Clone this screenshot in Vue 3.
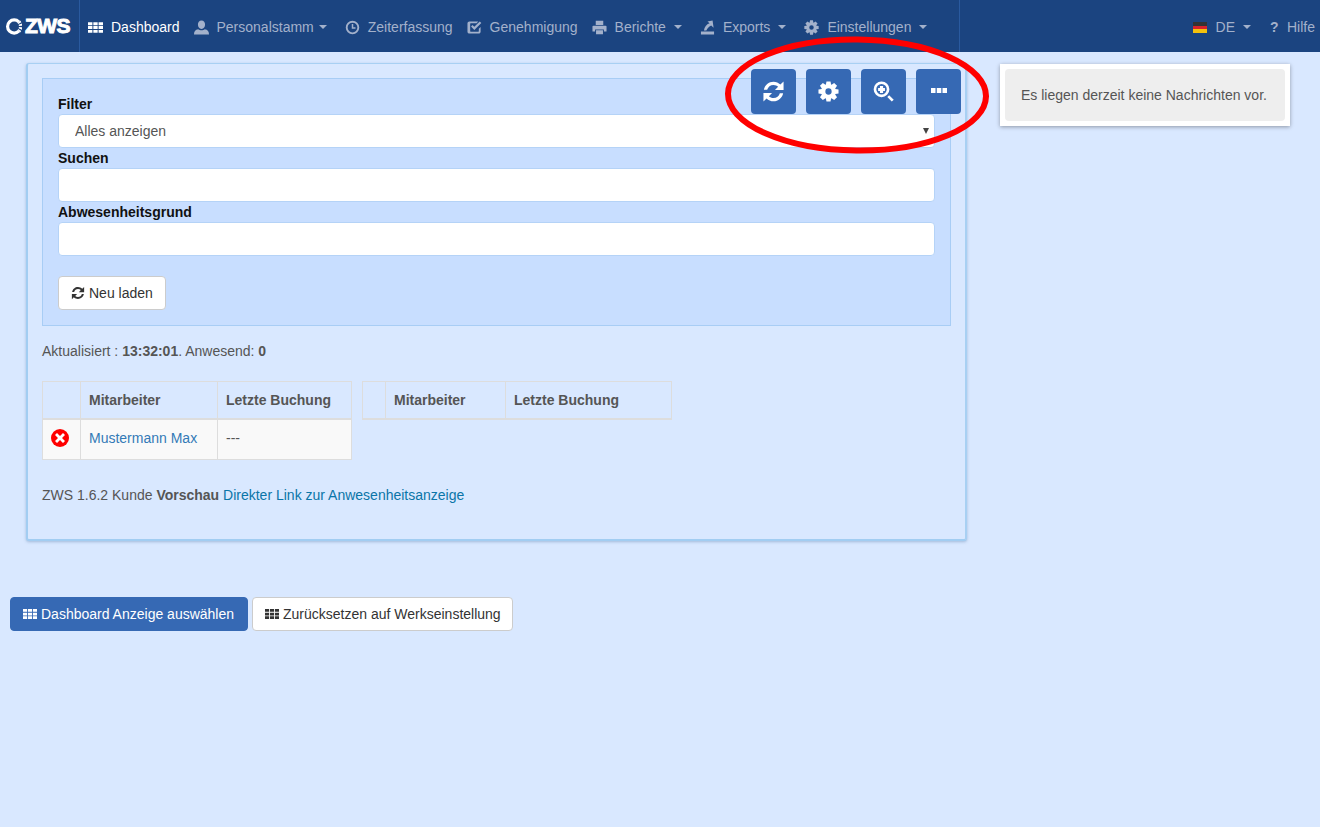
<template>
  <div class="page">
    <nav class="navbar">
      <a class="brand">
        <svg class="brand-ring" viewBox="0 0 16 16">
          <path class="ring-solid" d="M13 3.6A6.2 6.2 0 1 0 13 12.4" />
          <path class="ring-dash" d="M13 3.6A6.2 6.2 0 0 1 13 12.4" />
        </svg>
        <span class="brand-name">ZWS</span>
      </a>

      <ul class="nav-main">
        <li
          v-for="item in menu"
          :key="item.label"
          class="nav-item"
          :class="{ active: item.active, tight: item.tight }"
        >
          <svg class="ico" viewBox="0 0 16 16"><path :d="icons[item.icon]" /></svg>
          <span class="nav-label">{{ item.label }}</span>
          <span v-if="item.caret" class="caret"></span>
        </li>
      </ul>

      <ul class="nav-right">
        <li class="nav-item lang">
          <span class="flag"></span>
          <span class="nav-label">DE</span>
          <span class="caret"></span>
        </li>
        <li class="nav-item help">
          <span class="help-mark">?</span>
          <span>Hilfe</span>
        </li>
      </ul>
    </nav>

    <main class="content">
      <div class="top-row">
        <section class="card">
          <div class="tools">
            <button v-for="tool in tools" :key="tool" class="tool-btn" type="button">
              <svg class="ico" :class="'t-' + tool" viewBox="0 0 16 16"><path :d="icons[tool]" /></svg>
            </button>
          </div>

          <div class="filter-panel">
            <label class="field-label">Filter</label>
            <div class="select-wrap">
              <select class="control select">
                <option>Alles anzeigen</option>
              </select>
            </div>
            <label class="field-label">Suchen</label>
            <input class="control" type="text" />
            <label class="field-label">Abwesenheitsgrund</label>
            <input class="control" type="text" />
            <button class="btn reload" type="button">
              <svg class="ico" viewBox="0 0 16 16"><path :d="icons.refresh" /></svg>
              Neu laden
            </button>
          </div>

          <p class="status">Aktualisiert : <b>13:32:01</b>. Anwesend: <b>0</b></p>

          <div class="tables">
            <table class="staff left">
              <thead>
                <tr>
                  <th class="c-state"></th>
                  <th class="c-name">Mitarbeiter</th>
                  <th>Letzte Buchung</th>
                </tr>
              </thead>
              <tbody>
                <tr v-for="row in staff" :key="row.name">
                  <td class="state">
                    <svg class="absent" viewBox="0 0 18 18">
                      <circle cx="9" cy="9" r="9" />
                      <path d="M6 4l3 3 3-3 2 2-3 3 3 3-2 2-3-3-3 3-2-2 3-3-3-3z" />
                    </svg>
                  </td>
                  <td><a class="link">{{ row.name }}</a></td>
                  <td>{{ row.last }}</td>
                </tr>
              </tbody>
            </table>

            <table class="staff right">
              <thead>
                <tr>
                  <th class="c-state"></th>
                  <th class="c-name">Mitarbeiter</th>
                  <th>Letzte Buchung</th>
                </tr>
              </thead>
            </table>
          </div>

          <p class="version">
            ZWS 1.6.2 Kunde <b>Vorschau</b> <a class="link-direct">Direkter Link zur Anwesenheitsanzeige</a>
          </p>
        </section>

        <aside class="messages">
          <div class="well">Es liegen derzeit keine Nachrichten vor.</div>
        </aside>
      </div>

      <div class="actions">
        <button class="btn primary" type="button">
          <svg class="ico" viewBox="0 0 16 16"><path :d="icons.grid" /></svg>
          Dashboard Anzeige auswählen
        </button>
        <button class="btn reset" type="button">
          <svg class="ico" viewBox="0 0 16 16"><path :d="icons.grid" /></svg>
          Zurücksetzen auf Werkseinstellung
        </button>
      </div>
    </main>

    <!-- red marker drawn over the screenshot -->
    <svg class="marker" width="270" height="124" viewBox="0 0 270 124">
      <ellipse cx="132" cy="62" rx="129" ry="55.5" transform="rotate(0.6 132 62)" />
    </svg>
  </div>
</template>

<script setup>
const gearPath = () => {
  const teeth = 8;
  let d = "";
  for (let i = 0; i < teeth; i++) {
    const a = (i / teeth) * Math.PI * 2;
    const pts = [
      [5.6, a - 0.36],
      [7.8, a - 0.2],
      [7.8, a + 0.2],
      [5.6, a + 0.36],
    ];
    for (const [r, t] of pts) {
      const x = (8 + r * Math.cos(t)).toFixed(2);
      const y = (8 + r * Math.sin(t)).toFixed(2);
      d += (d ? "L" : "M") + x + " " + y;
    }
  }
  return d + "zM8 5.6a2.4 2.4 0 1 0 0 4.8 2.4 2.4 0 0 0 0-4.8z";
};

const icons = {
  grid:
    "M0 2.4h4.7v3.1H0zM5.7 2.4h4.6v3.1H5.7zM11.3 2.4H16v3.1h-4.7zM0 6.5h4.7v3.1H0zM5.7 6.5h4.6v3.1H5.7zM11.3 6.5H16v3.1h-4.7zM0 10.6h4.7v3.1H0zM5.7 10.6h4.6v3.1H5.7zM11.3 10.6H16v3.1h-4.7z",
  user:
    "M8 .4c2.5 0 3.8 2 3.8 4.5S10.5 9.6 8 9.6 4.2 7.4 4.2 4.9 5.5.4 8 .4zM0 15.4c0-3.4 1.2-5 4.6-5.6.8.7 2 1.2 3.4 1.2s2.6-.5 3.4-1.2c3.4.6 4.6 2.2 4.6 5.6z",
  clock:
    "M8 .8a7.2 7.2 0 1 0 0 14.4A7.2 7.2 0 0 0 8 .8zm0 2a5.2 5.2 0 1 1 0 10.4A5.2 5.2 0 0 1 8 2.8zM7.2 4.3h1.6v3.5h2.4v1.6h-4z",
  check:
    "M2.5 1.5H12l-1.8 1.9H3.9c-.3 0-.5.2-.5.5v8.2c0 .3.2.5.5.5h8.2c.3 0 .5-.2.5-.5V9.3l1.9-1.9v5.1c0 1.1-.9 2-2 2H2.5c-1.1 0-2-.9-2-2v-9c0-1.1.9-2 2-2zM4.3 6.8l1.5-1.5 2 2 5.8-5.8 1.7 1.7-7.5 7.4z",
  print:
    "M4 .8h8v4.6H4zM1.5 6h13c.6 0 1 .4 1 1v5.2h-2.8V10H3.3v2.2H.5V7c0-.6.4-1 1-1zM4.3 10.8h7.4v4.4H4.3z",
  export:
    "M13.4.6l1.1 7.6-2.6-2.3C9.2 7.4 7.8 9 6.8 11.2H4.2c.5-3.7 2.7-6.7 6-7.8L8 1.6zM1 12.2h14v3.2H1z",
  cog: gearPath(),
  refresh:
    "M8 1.2C4.7 1.2 1.9 3.6 1.3 6.8h2.3C4.1 4.8 5.9 3.4 8 3.4c1.3 0 2.4.5 3.2 1.3L9 7h6V1l-2.2 2.2C11.5 2 9.9 1.2 8 1.2zM8 14.8c3.3 0 6.1-2.4 6.7-5.6h-2.3c-.5 2-2.3 3.4-4.4 3.4-1.3 0-2.4-.5-3.2-1.3L7 9H1v6l2.2-2.2c1.3 1.2 2.9 2 4.8 2z",
  zoom:
    "M6.5.3a6 6 0 1 0 0 12 6 6 0 0 0 0-12zm0 2a4 4 0 1 1 0 8 4 4 0 0 1 0-8zM5.3 3.9h2.4v1.4h1.4v2.4H7.7v1.4H5.3V7.7H3.9V5.3h1.4zM10.9 12.2l1.4-1.4 3.5 3.4-1.5 1.4z",
  more: "M0 4h4.5v5H0zM5.8 4h4.5v5H5.8zM11.5 4H16v5h-4.5z",
};

const menu = [
  { label: "Dashboard", icon: "grid", active: true },
  { label: "Personalstamm", icon: "user", caret: true, tight: true },
  { label: "Zeiterfassung", icon: "clock" },
  { label: "Genehmigung", icon: "check" },
  { label: "Berichte", icon: "print", caret: true },
  { label: "Exports", icon: "export", caret: true },
  { label: "Einstellungen", icon: "cog", caret: true },
];

const tools = ["refresh", "cog", "zoom", "more"];

const staff = [{ name: "Mustermann Max", last: "---" }];
</script>

<style>
html,
body {
  margin: 0;
  background: #d9e8ff;
}
</style>

<style scoped>
.page {
  position: relative;
  min-height: 827px;
  background: #d9e8ff;
  font-family: "Liberation Sans", Arial, sans-serif;
  font-size: 14px;
  line-height: 20px;
  color: #555;
}

.ico {
  display: inline-block;
  width: 14px;
  height: 14px;
  fill: currentColor;
  fill-rule: evenodd;
  flex: none;
}

/* navbar */
.navbar {
  display: flex;
  height: 52px;
  background: #1b4480;
  color: #a3b1cb;
}

.brand {
  display: flex;
  align-items: center;
  gap: 3px;
  width: 80px;
  box-sizing: border-box;
  padding-left: 5px;
  border-right: 1px solid #2a5a9f;
  color: #fff;
}

.brand-ring {
  width: 17px;
  height: 17px;
  fill: none;
  stroke: #fff;
}

.ring-solid {
  stroke-width: 3;
}

.ring-dash {
  stroke-width: 3.4;
  stroke-dasharray: 1.6 1.1;
}

.brand-name {
  font-size: 21px;
  font-weight: 700;
  letter-spacing: -0.6px;
  -webkit-text-stroke: 1px #fff;
}

.nav-main,
.nav-right {
  display: flex;
  align-items: center;
  margin: 0;
  padding: 2px 0 0;
  list-style: none;
}

.nav-main {
  width: 880px;
  box-sizing: border-box;
  padding-left: 8px;
  gap: 14px;
  border-right: 1px solid #2a5a9f;
}

.nav-right {
  margin-left: auto;
  gap: 19px;
  padding-right: 5px;
}

.nav-item {
  display: flex;
  align-items: center;
  gap: 8px;
}

.nav-item .ico {
  width: 15px;
  height: 15px;
}

.nav-item.active {
  color: #fff;
}

.nav-item.tight {
  margin-right: 4px;
}

.nav-item .caret {
  margin-right: 4px;
}

.nav-item.tight .caret {
  margin-left: -3px;
  margin-right: 0;
}

.caret {
  width: 0;
  height: 0;
  border-left: 4px solid transparent;
  border-right: 4px solid transparent;
  border-top: 4px solid currentColor;
}

.flag {
  width: 14px;
  height: 11px;
  background: linear-gradient(#333 0 33%, #d8232a 33% 66%, #f4c20d 66%);
  margin-right: 1px;
}

.nav-item.lang .caret {
  margin-right: 0;
}

.help {
  gap: 9px;
}

.help-mark {
  width: 8px;
  font-size: 14px;
  font-weight: 700;
  text-align: center;
}

/* content */
.content {
  padding-top: 11px;
}

.top-row {
  display: flex;
  align-items: flex-start;
  padding-left: 26px;
}

.card {
  position: relative;
  width: 941px;
  height: 478px;
  box-sizing: border-box;
  padding: 14px 14px 0 14px;
  background: #d9e8ff;
  border-left: 2px solid #a2cdf2;
  border-top: 1px solid #a8d0f3;
  border-bottom: 2px solid #a2cdf2;
  border-right: 2px solid #a8d0f3;
  border-radius: 3px;
  box-shadow: 0 1px 3px rgba(60, 100, 150, 0.35);
}

.tools {
  position: absolute;
  top: 5px;
  right: 4px;
  display: flex;
  gap: 10px;
}

.tool-btn {
  display: flex;
  align-items: center;
  justify-content: center;
  width: 45px;
  height: 45px;
  padding: 0;
  border: 0;
  border-radius: 4px;
  background: #3669b4;
  color: #fff;
}

.t-refresh {
  width: 23px;
  height: 23px;
}

.t-cog,
.t-zoom {
  width: 21px;
  height: 21px;
}

.t-more {
  width: 16px;
  height: 16px;
}

.filter-panel {
  display: flex;
  flex-direction: column;
  align-items: flex-start;
  height: 248px;
  box-sizing: border-box;
  padding: 15px 15px 0;
  background: #c8deff;
  border: 1px solid #a8cdf5;
}

.field-label {
  font-weight: 700;
  color: #111;
}

.select-wrap {
  position: relative;
  width: 100%;
}

.select-wrap::after {
  content: "";
  position: absolute;
  top: 14px;
  right: 6px;
  border-left: 3.5px solid transparent;
  border-right: 3.5px solid transparent;
  border-top: 6px solid #444;
}

.control {
  display: block;
  width: 100%;
  height: 34px;
  box-sizing: border-box;
  padding: 0 12px;
  background: #fff;
  border: 1px solid #b5d3f7;
  border-radius: 4px;
  font: inherit;
  color: #555;
}

.select {
  appearance: none;
  padding-left: 16px;
}

.btn {
  display: inline-flex;
  align-items: center;
  gap: 4px;
  height: 34px;
  box-sizing: border-box;
  padding: 0 12px;
  background: #fff;
  border: 1px solid #ccc;
  border-radius: 4px;
  font: inherit;
  color: #333;
}

.reload {
  margin-top: 20px;
}

.btn.primary {
  padding-right: 13px;
  background: #3669b4;
  border-color: #3669b4;
  color: #fff;
}

.btn.reset {
  padding-right: 11px;
}

.status {
  margin: 15px 0 0;
}

.tables {
  display: flex;
  align-items: flex-start;
  gap: 10px;
  margin-top: 20px;
}

.staff {
  border-collapse: collapse;
  table-layout: fixed;
  width: 310px;
}

.staff th,
.staff td {
  border: 1px solid #ddd;
  padding: 8px;
  text-align: left;
}

.staff th {
  height: 37px;
  box-sizing: border-box;
  border-bottom-width: 2px;
  color: #555;
}

.staff td {
  height: 40px;
  box-sizing: border-box;
  padding: 7px 8px 9px;
  background: #f9f9f9;
}

.left .c-state {
  width: 38px;
}

.left .c-name {
  width: 137px;
}

.right .c-state {
  width: 23px;
}

.right .c-name {
  width: 120px;
}

.staff .state {
  padding: 0 0 2px 8px;
}

.absent {
  display: block;
  width: 18px;
  height: 18px;
}

.absent circle {
  fill: #f00;
}

.absent path {
  fill: #fff;
}

.link {
  color: #337ab7;
}

.link-direct {
  color: #0a75a8;
}

.version {
  margin: 25px 0 0;
}

.messages {
  width: 290px;
  box-sizing: border-box;
  margin: 1px 0 0 33px;
  padding: 5px;
  background: #fff;
  box-shadow: 0 1px 4px rgba(0, 0, 0, 0.35);
}

.well {
  padding: 16px;
  background: #eee;
  border-radius: 4px;
}

.actions {
  display: flex;
  gap: 4px;
  margin: 56px 0 0 10px;
}

/* overlay */
.marker {
  position: absolute;
  top: 33px;
  left: 725px;
  pointer-events: none;
}

.marker ellipse {
  fill: none;
  stroke: #f00;
  stroke-width: 6;
}
</style>
